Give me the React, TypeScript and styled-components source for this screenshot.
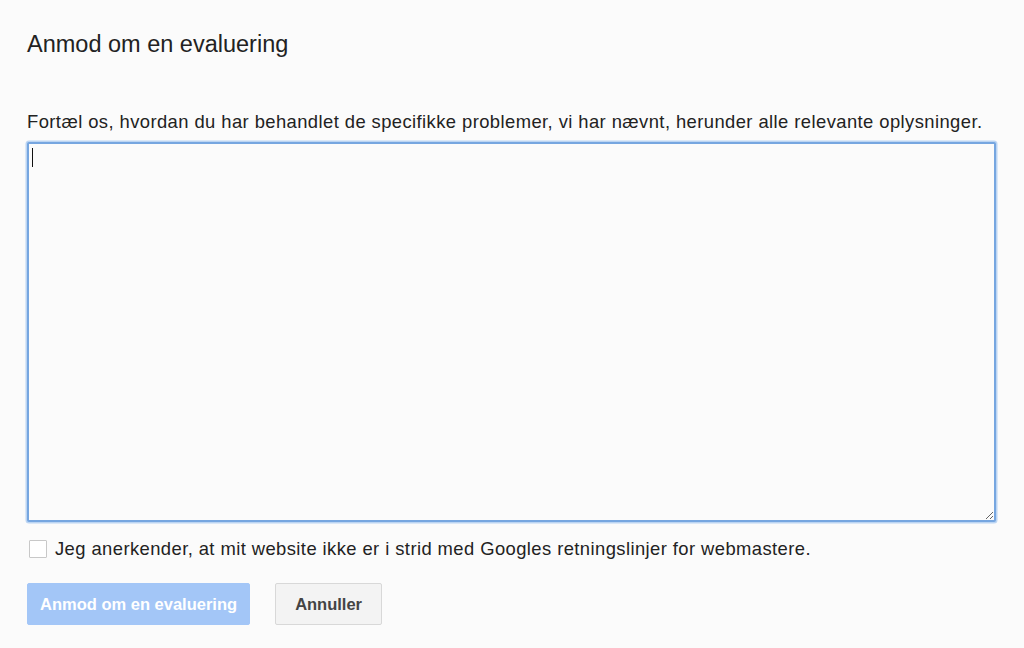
import React from 'react';
import styled, { createGlobalStyle } from 'styled-components';

const GlobalStyle = createGlobalStyle`
    html, body {
        margin: 0;
        padding: 0;
        background: #fbfbfb;
    }
    body {
        font-family: 'Liberation Sans', Arial, sans-serif;
        color: #222;
    }
`;

const Page = styled.div`
    width: 1024px;
    height: 648px;
    box-sizing: border-box;
    padding: 30px 0 0 27px;
    overflow: hidden;
`;

const Title = styled.h1`
    margin: 0;
    font-size: 23.5px;
    font-weight: normal;
    line-height: 28px;
    color: #222;
`;

const Intro = styled.p`
    margin: 53px 0 0 0;
    font-size: 18.4px;
    letter-spacing: 0.42px;
    line-height: 22px;
    color: #222;
    white-space: nowrap;
`;

const FieldWrap = styled.div`
    position: relative;
    margin-top: 9px;
    width: 969px;
    height: 380px;
`;

const TextArea = styled.textarea`
    box-sizing: border-box;
    width: 100%;
    height: 100%;
    margin: 0;
    padding: 6px;
    border: 2px solid #76a6e0;
    border-radius: 2px;
    box-shadow: 0 0 0 1.5px #bcd5f3;
    background: #fbfbfb;
    font-family: 'Liberation Sans', Arial, sans-serif;
    font-size: 16px;
    outline: none;
    resize: both;
`;

const Caret = styled.span`
    position: absolute;
    left: 5px;
    top: 6px;
    width: 1px;
    height: 19px;
    background: #111;
`;

const CheckRow = styled.label`
    display: flex;
    align-items: center;
    gap: 8px;
    margin-top: 16px;
    margin-left: 2px;
    font-size: 18.4px;
    letter-spacing: 0.42px;
    line-height: 22px;
    color: #222;
`;

const Box = styled.span`
    width: 16px;
    height: 16px;
    border: 1px solid #c8c8c8;
    border-radius: 1px;
    background: #fff;
`;

const Actions = styled.div`
    display: flex;
    gap: 25px;
    margin-top: 23px;
`;

const Button = styled.button<{ $primary?: boolean }>`
    height: 42px;
    padding: 0 ${p => (p.$primary ? '12px' : '19px')};
    border-radius: 2px;
    border: 1px solid ${p => (p.$primary ? '#a3c6f7' : '#d8d8d8')};
    background: ${p => (p.$primary ? '#a3c6f7' : '#f3f3f3')};
    color: ${p => (p.$primary ? '#fff' : '#444')};
    font-family: 'Liberation Sans', Arial, sans-serif;
    font-size: 16.5px;
    font-weight: bold;
    cursor: ${p => (p.$primary ? 'default' : 'pointer')};
`;

const App = () => {
    return (
        <Page>
            <GlobalStyle />
            <Title>Anmod om en evaluering</Title>
            <Intro>Fortæl os, hvordan du har behandlet de specifikke problemer, vi har nævnt, herunder alle relevante oplysninger.</Intro>
            <FieldWrap>
                <TextArea />
                <Caret />
            </FieldWrap>
            <CheckRow>
                <Box />
                Jeg anerkender, at mit website ikke er i strid med Googles retningslinjer for webmastere.
            </CheckRow>
            <Actions>
                <Button $primary>Anmod om en evaluering</Button>
                <Button>Annuller</Button>
            </Actions>
        </Page>
    );
};

export default App;
